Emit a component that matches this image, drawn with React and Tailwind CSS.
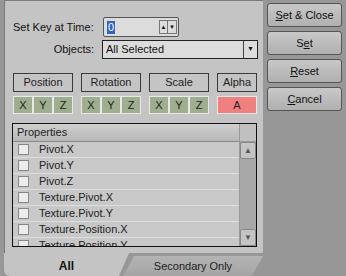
import React from 'react';

const font = { fontFamily: '"Liberation Sans", Arial, sans-serif' };

const props = [
    'Pivot.X',
    'Pivot.Y',
    'Pivot.Z',
    'Texture.Pivot.X',
    'Texture.Pivot.Y',
    'Texture.Position.X',
    'Texture.Position.Y',
];

const Axis = ({ label }) => (
    <div className="flex h-[18px] w-[20px] items-center justify-center border border-[#e8e8e8] bg-[#9fae8f] text-[11px] text-[#222]">
        {label}
    </div>
);

const Group = ({ title, axes, width }) => (
    <div className="flex flex-col gap-[4px]" style={{ width }}>
        <div className="flex h-[19px] items-center justify-center border border-[#3a3a3a] bg-[#c4c4c4] text-[11px] text-[#222]">
            {title}
        </div>
        <div className="flex">
            {axes.map((a) => <Axis key={a} label={a} />)}
        </div>
    </div>
);

const SideButton = ({ children }) => (
    <button className="flex h-[24px] w-[75px] items-center justify-center rounded-[3px] border border-[#555] bg-gradient-to-b from-[#c8c8c8] to-[#b0b0b0] text-[11px] text-[#111]">
        {children}
    </button>
);

export default function App() {
    return (
        <div className="relative h-[276px] w-[346px] overflow-hidden bg-[#979797]" style={font}>
            <div className="flex">
                <div className="flex flex-col">
                    {/* main panel */}
                    <div className="ml-[4px] h-[253px] w-[259px] border-l border-t border-[#7a7a7a] bg-[#c4c4c4] pl-[8px] pt-[16px]">
                        <div className="flex items-center">
                            <span className="w-[90px] text-[11px] text-[#111]">Set Key at Time:</span>
                            <div className="flex h-[20px] w-[76px] items-center justify-between rounded-[2px] border border-[#555] bg-[#dcdcdc] pl-[3px] pr-[1px]">
                                <span className="bg-[#3163c5] px-[1px] text-[11px] leading-[13px] text-white">0</span>
                                <div className="flex h-[14px] border border-[#777]">
                                    <span className="flex w-[8px] items-center justify-center border-r border-[#777] text-[6px] text-[#111]">▲</span>
                                    <span className="flex w-[8px] items-center justify-center text-[6px] text-[#111]">▼</span>
                                </div>
                            </div>
                        </div>
                        <div className="mt-[3px] flex items-center">
                            <span className="w-[81px] text-right text-[11px] text-[#111]">Objects:</span>
                            <div className="ml-[8px] flex h-[19px] w-[156px] items-center justify-between border border-[#222] bg-[#dcdcdc]">
                                <span className="pl-[3px] text-[11px] text-[#111]">All Selected</span>
                                <span className="flex h-full w-[14px] items-center justify-center border-l border-[#444] text-[7px] text-[#111]">▼</span>
                            </div>
                        </div>
                        <div className="mt-[14px] flex gap-[8px]">
                            <Group title="Position" axes={['X', 'Y', 'Z']} width={60} />
                            <Group title="Rotation" axes={['X', 'Y', 'Z']} width={60} />
                            <Group title="Scale" axes={['X', 'Y', 'Z']} width={60} />
                            <div className="flex w-[40px] flex-col gap-[4px]">
                                <div className="flex h-[19px] items-center justify-center border border-[#3a3a3a] text-[11px] text-[#222]">Alpha</div>
                                <div className="flex h-[18px] items-center justify-center border border-[#e8e8e8] bg-[#f08080] text-[11px] text-[#222]">A</div>
                            </div>
                        </div>
                        {/* properties list */}
                        <div className="-ml-[1px] mt-[9px] flex h-[124px] w-[245px] border border-[#111] bg-[#c8c8c8]">
                            <div className="flex flex-1 flex-col overflow-hidden">
                                <div className="flex h-[18px] shrink-0 items-center border-b border-[#888] bg-gradient-to-b from-[#cfcfcf] to-[#b8b8b8] pl-[4px] text-[11px] text-[#222]">
                                    Properties
                                </div>
                                {props.map((p) => (
                                    <div key={p} className="flex h-[16px] shrink-0 items-center border-b border-[#dedede] pl-[5px]">
                                        <span className="h-[11px] w-[11px] border border-[#888] bg-[#ececec]" />
                                        <span className="ml-[10px] text-[11px] text-[#222]">{p}</span>
                                    </div>
                                ))}
                            </div>
                            <div className="flex w-[17px] flex-col border-l border-[#999] bg-[#a8a8a8]">
                                <div className="h-[18px] border-b border-[#999] bg-[#c0c0c0]" />
                                <div className="flex h-[17px] items-center justify-center rounded-[2px] border border-[#888] bg-[#c4c4c4] text-[8px] text-[#555]">▲</div>
                                <div className="flex-1" />
                                <div className="flex h-[17px] items-center justify-center rounded-[2px] border border-[#888] bg-[#c4c4c4] text-[8px] text-[#555]">▼</div>
                            </div>
                        </div>
                    </div>
                    {/* tabs */}
                    <div className="flex h-[23px]">
                        <div className="ml-[4px] flex w-[125px] items-center justify-center rounded-bl-[6px] bg-[#c4c4c4] pt-[3px] text-[12px] font-bold text-[#111] [clip-path:polygon(0_0,100%_0,92%_100%,0_100%)]">
                            All
                        </div>
                        <div className="-ml-[6px] mt-[3px] flex w-[140px] items-center justify-center bg-gradient-to-b from-[#b4b4b4] to-[#a4a4a4] text-[11px] text-[#222] [clip-path:polygon(8%_0,100%_0,92%_100%,0_100%)]">
                            Secondary Only
                        </div>
                    </div>
                </div>
                {/* side buttons */}
                <div className="ml-[4px] flex flex-col gap-[4px] pt-[3px]">
                    <SideButton><span><u>S</u>et &amp; Close</span></SideButton>
                    <SideButton><span>S<u>e</u>t</span></SideButton>
                    <SideButton><span><u>R</u>eset</span></SideButton>
                    <SideButton><span><u>C</u>ancel</span></SideButton>
                </div>
            </div>
        </div>
    );
}
